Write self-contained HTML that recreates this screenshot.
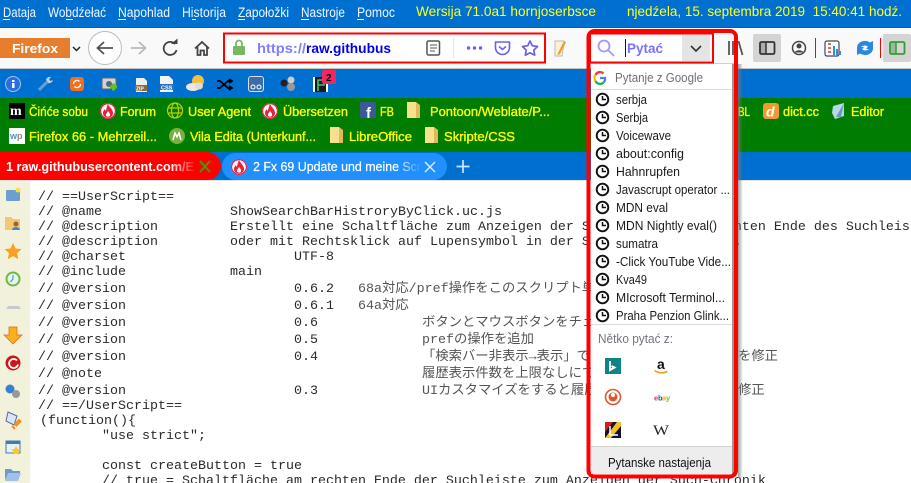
<!DOCTYPE html>
<html><head><meta charset="utf-8"><style>
html,body{margin:0;padding:0;background:#fff;overflow:hidden;width:911px;height:483px}
svg{display:block}
text{font-family:"Liberation Sans","Noto Sans CJK JP",sans-serif;white-space:pre}
.m{font-size:13.5px;fill:#f0f6ff}
.y{font-size:14px;fill:#ffff20}
.b{font-size:13px;fill:#ffff00;stroke:#ffff00;stroke-width:.35px}
.c{font-family:"Liberation Mono","Noto Sans CJK JP",monospace;font-size:13.33px;fill:#2a2a2a}
.j{fill:#555}
.p{font-size:12.5px;fill:#1a1a1a}
</style></head><body>
<svg width="911" height="483" viewBox="0 0 911 483" xmlns="http://www.w3.org/2000/svg">
<defs>
<g id="clock"><circle cx="0" cy="0" r="5.800" fill="#fff" stroke="#111" stroke-width="1.900"/><path d="M0-3.500V0H3.500" fill="none" stroke="#111" stroke-width="1.500"/></g>
<g id="fire"><circle r="8" fill="#fff"/><circle r="7.400" fill="none" stroke="#e02040" stroke-width="1.200"/><path d="M0-7C1 -4 5-2 5 2C5 5 2.500 6.500 0 6.500C-2.500 6.500-5 5-5 2C-5 0-4-1-3-2C-3-1-2.500 0-2-0.500C-1.500-3-1-5 0-7Z" fill="#e8203a"/><path d="M0 0C1 1.500 2.500 2.500 2 4.500C1.500 6-1.500 6-2 4.500C-2.500 3-1 2 0 0Z" fill="#fff"/></g>
<g id="folder"><path d="M0 1H9V17H0Z" fill="#f7e08e"/><path d="M9 1L13 4V17H9Z" fill="#e2b95a"/></g>
<linearGradient id="fr" x1="0" x2="1"><stop offset="0" stop-color="#ff0000" stop-opacity="0"/><stop offset="1" stop-color="#ff0000"/></linearGradient>
<linearGradient id="fb" x1="0" x2="1"><stop offset="0" stop-color="#2090ff" stop-opacity="0"/><stop offset="1" stop-color="#2090ff"/></linearGradient>
<linearGradient id="sh" x1="0" x2="1"><stop offset="0" stop-color="#777" stop-opacity=".7"/><stop offset="1" stop-color="#777" stop-opacity="0"/></linearGradient>
</defs>

<!-- bands -->
<rect width="911" height="27" fill="#0070d0"/>
<rect y="27" width="911" height="1" fill="#0a5ea8"/>
<rect y="28" width="911" height="40" fill="#f9f9fa"/>
<rect y="68" width="911" height="1" fill="#c4c4c4"/>
<rect y="69" width="911" height="29" fill="#0070d0"/>
<rect y="98" width="911" height="54" fill="#007c00"/>
<rect y="152" width="911" height="28" fill="#0070d0"/>
<rect y="180" width="911" height="303" fill="#fff"/>
<rect y="180" width="911" height="1" fill="#e4e4e4"/>
<rect y="181" width="30" height="302" fill="#f2f2dc"/>

<!-- menu -->
<text class="m" x="3" y="17" textLength="33" lengthAdjust="spacingAndGlyphs">Dataja</text><rect x="3" y="19" width="7" height="1" fill="#fff"/>
<text class="m" x="48" y="17" textLength="58" lengthAdjust="spacingAndGlyphs">Wobdźełać</text><rect x="66" y="19" width="7" height="1" fill="#fff"/>
<text class="m" x="118" y="17" textLength="52" lengthAdjust="spacingAndGlyphs">Napohlad</text><rect x="118" y="19" width="8" height="1" fill="#fff"/>
<text class="m" x="182" y="17" textLength="44" lengthAdjust="spacingAndGlyphs">Historija</text><rect x="192" y="19" width="4" height="1" fill="#fff"/>
<text class="m" x="238" y="17" textLength="51" lengthAdjust="spacingAndGlyphs">Zapołožki</text><rect x="238" y="19" width="7" height="1" fill="#fff"/>
<text class="m" x="301" y="17" textLength="44" lengthAdjust="spacingAndGlyphs">Nastroje</text><rect x="301" y="19" width="8" height="1" fill="#fff"/>
<text class="m" x="357" y="17" textLength="38" lengthAdjust="spacingAndGlyphs">Pomoc</text><rect x="357" y="19" width="7" height="1" fill="#fff"/>
<text class="y" x="416" y="16" textLength="180" lengthAdjust="spacingAndGlyphs">Wersija 71.0a1 hornjoserbsce</text>
<text class="y" x="627" y="16" textLength="275" lengthAdjust="spacingAndGlyphs">njedźela, 15. septembra 2019  15:40:41 hodź.</text>

<!-- nav -->
<rect x="0" y="38" width="70" height="20" fill="#e67e2e"/>
<text x="12" y="53" font-size="13" font-weight="bold" fill="#fff" textLength="46" lengthAdjust="spacingAndGlyphs">Firefox</text>
<path d="M73 47l3.500 3.500 3.500-3.500" fill="none" stroke="#222" stroke-width="1.500"/>
<circle cx="105" cy="48" r="16.500" fill="#fff" stroke="#bbb" stroke-width="1"/>
<path d="M113 48H98M104 42l-6.500 6 6.500 6" fill="none" stroke="#555" stroke-width="1.800"/>
<path d="M131 48H145M139 42l6.500 6-6.500 6" fill="none" stroke="#b8b8b8" stroke-width="1.800"/>
<path d="M175 44A6.500 6.500 0 1 0 176.500 50" fill="none" stroke="#444" stroke-width="1.800"/><path d="M171 44h6.500v-5.500z" fill="#444"/>
<path d="M195 48.500l7-6.500 7 6.500M197.500 47V55H200.500V50.500H204V55H207V47" fill="none" stroke="#444" stroke-width="1.800"/>

<!-- url -->
<rect x="224" y="33.500" width="321" height="29" fill="#fff" stroke="#f00" stroke-width="2"/>
<rect x="233" y="46" width="12" height="9" rx="1" fill="#78b860"/><path d="M236 46V43.500A3 3 0 0 1 242 43.500V46" fill="none" stroke="#78b860" stroke-width="1.800"/>
<text x="257" y="53" font-size="14" font-weight="bold" fill="#8080ff" textLength="49" lengthAdjust="spacingAndGlyphs">https://</text>
<text x="306" y="53" font-size="14" font-weight="bold" fill="#0000f0" textLength="85" lengthAdjust="spacingAndGlyphs">raw.githubus</text>
<rect x="427" y="41" width="12.500" height="14" rx="1.500" fill="none" stroke="#555" stroke-width="1.500"/><path d="M430 45h7M430 48h7M430 51h5" stroke="#555" stroke-width="1"/>
<rect x="453" y="38" width="1" height="20" fill="#e4e4e4"/>
<circle cx="468.500" cy="48" r="1.700" fill="#6a60f0"/><circle cx="474.500" cy="48" r="1.700" fill="#6a60f0"/><circle cx="480.500" cy="48" r="1.700" fill="#6a60f0"/>
<path d="M495.500 42H509.500V47.500A7 7 0 0 1 495.500 47.500Z" fill="none" stroke="#6a60f0" stroke-width="1.600" stroke-linejoin="round"/><path d="M499 46.500l3.500 3 3.500-3" fill="none" stroke="#6a60f0" stroke-width="1.600"/>
<path d="M530 41l2.300 4.700 5.200.8-3.700 3.600.9 5.100-4.700-2.400-4.700 2.400.9-5.100-3.700-3.600 5.200-.8z" fill="none" stroke="#6a60f0" stroke-width="1.700" stroke-linejoin="round"/>
<path d="M555 41h9v3l-2 12h-7z" fill="#fdf3d0" stroke="#bbb" stroke-width="1"/><path d="M558 53l6-12 2 1-6 12-2.500 1z" fill="#e8a030"/>

<!-- right toolbar -->
<rect x="753" y="34" width="28" height="28" rx="2" fill="#d4d4d4"/>
<rect x="760" y="42" width="14.500" height="12" rx="1.500" fill="none" stroke="#333" stroke-width="1.800"/><rect x="760" y="42" width="6" height="12" fill="#333" opacity=".25"/><path d="M766 42v12" stroke="#333" stroke-width="1.500"/>
<circle cx="799" cy="48" r="6.500" fill="none" stroke="#444" stroke-width="1.500"/><circle cx="799" cy="46" r="2.500" fill="#444"/><path d="M794.500 52.500a5 4 0 0 1 9 0" fill="#444"/>
<rect x="815" y="38" width="1" height="20" fill="#f00"/>
<rect x="825" y="41" width="14" height="15" rx="2" fill="#fff" stroke="#445" stroke-width="1.200"/><path d="M828 44h3M828 48h3M828 52h3" stroke="#d33" stroke-width="1.500"/><path d="M834 55V46M837 55V49M840 55V51" stroke="#3a8ad0" stroke-width="2"/>
<path d="M857 47a8 7 0 0 1 13-4.500l3-1.500v8h-7l2-2.500a5 4 0 0 0-7.500 1z" fill="#2a88e0"/><path d="M873 49a8 7 0 0 1-13 4.500l-3 1.500v-8h7l-2 2.500a5 4 0 0 0 7.500-1z" fill="#2a88e0"/>
<rect x="880" y="38" width="1" height="20" fill="#f00"/>
<rect x="883" y="34" width="28" height="28" rx="2" fill="#d4d4d4"/>
<rect x="890" y="42" width="14.500" height="12" rx="1.500" fill="none" stroke="#3a9a3a" stroke-width="1.800"/><rect x="890" y="42" width="6" height="12" fill="#3a9a3a" opacity=".4"/><path d="M896 42v12" stroke="#3a9a3a" stroke-width="1.500"/>

<!-- icon bar -->
<circle cx="13" cy="84" r="7.500" fill="#2a6fd8"/><circle cx="13" cy="84" r="7.500" fill="none" stroke="#a8c4f0"/><rect x="12" y="83" width="2.500" height="5" fill="#fff"/><rect x="12" y="80" width="2.500" height="2" fill="#fff"/>
<path d="M39 90l8-8" stroke="#6aa0d8" stroke-width="3"/><path d="M46 80a4 4 0 0 1 5-3l-2 2.500 1.500 1.500 2.500-1a4 4 0 0 1-5 3z" fill="#c0d0e0"/>
<rect x="70" y="77" width="14" height="14" rx="3" fill="#f07020"/><path d="M73.500 84a3.500 3.500 0 0 1 6-2.500M80.500 84a3.500 3.500 0 0 1-6 2.500" fill="none" stroke="#fff" stroke-width="1.300"/>
<rect x="102" y="78" width="14" height="11" rx="1.500" fill="#cfd4da" stroke="#666"/><circle cx="109" cy="84" r="3" fill="#567"/><rect x="110" y="85.500" width="7" height="3" fill="#5cc030"/><rect x="112" y="83.500" width="3" height="7" fill="#5cc030"/>
<path d="M136 78h8l3 3v11h-11z" fill="#eee"/><rect x="135" y="85" width="12" height="6" fill="#8a6a30"/><text x="136" y="90.500" font-size="5" font-weight="bold" fill="#fff">ZIP</text>
<path d="M160 76h9l4 4v12h-13z" fill="#f4f4f4"/><rect x="160" y="84" width="14" height="6" fill="#2a72c0"/><text x="161" y="89.500" font-size="5.500" font-weight="bold" fill="#fff">CSS</text>
<circle cx="198" cy="81" r="6" fill="#f0c040"/><ellipse cx="193" cy="87" rx="7" ry="4" fill="#ece8e0"/><ellipse cx="199" cy="86" rx="4" ry="3.500" fill="#e0dcd2"/>
<path d="M217 81h3l8 7h3M217 88h3l8-7h3M229 79l3 2-3 2M229 86l3 2-3 2" fill="none" stroke="#000" stroke-width="1.700"/>
<rect x="248.500" y="76.500" width="15" height="15" rx="2.500" fill="#3a6ea8" stroke="#dde" stroke-width="1"/><circle cx="253" cy="87" r="2" fill="none" stroke="#fff"/><circle cx="259" cy="87" r="2" fill="none" stroke="#fff"/>
<circle cx="284" cy="83" r="3.500" fill="#222"/><circle cx="291" cy="80" r="3.500" fill="#ccc"/><circle cx="291" cy="87" r="4" fill="#999"/>
<rect x="313" y="77" width="15" height="15" fill="#fff"/><rect x="315" y="77" width="11" height="15" fill="#1a1a1a"/><path d="M318 91V80H324V85H318" fill="none" stroke="#40c080" stroke-width="1.600"/>
<rect x="322" y="70" width="14" height="14" rx="2" fill="#f02860"/><text x="326" y="81" font-size="10" font-weight="bold" fill="#111">2</text>

<!-- bookmarks 1 -->
<rect x="9" y="103" width="16" height="16" fill="#000"/><text x="10" y="115" font-size="14" font-weight="bold" fill="#fff" style="font-family:'Liberation Serif',serif">m</text>
<text class="b" x="29" y="116" textLength="59" lengthAdjust="spacingAndGlyphs">Čińće sobu</text>
<use href="#fire" x="108" y="111"/>
<text class="b" x="120" y="116" textLength="36" lengthAdjust="spacingAndGlyphs">Forum</text>
<g fill="none" stroke="#b8d000" stroke-width="1.200"><circle cx="175" cy="110.500" r="7.500"/><ellipse cx="175" cy="110.500" rx="3.500" ry="7.500"/><path d="M168 108h14M168 113h14"/></g>
<text class="b" x="188" y="116" textLength="63" lengthAdjust="spacingAndGlyphs">User Agent</text>
<use href="#fire" x="270" y="111"/>
<text class="b" x="283" y="116" textLength="65" lengthAdjust="spacingAndGlyphs">Übersetzen</text>
<rect x="360" y="102" width="16" height="16" fill="#3b5998"/><text x="366" y="118" font-size="15" font-weight="bold" fill="#fff">f</text>
<text class="b" x="380" y="116" textLength="14" lengthAdjust="spacingAndGlyphs">FB</text>
<use href="#folder" x="407" y="101"/>
<text class="b" x="430" y="116" textLength="120" lengthAdjust="spacingAndGlyphs">Pontoon/Weblate/P...</text>
<text class="b" x="738" y="116" textLength="12" lengthAdjust="spacingAndGlyphs">BL</text>
<rect x="763" y="103" width="16" height="16" rx="3" fill="#f09a30"/><text x="766" y="116.500" font-size="14" font-weight="bold" font-style="italic" fill="#fff">d</text>
<text class="b" x="783" y="116" textLength="36" lengthAdjust="spacingAndGlyphs">dict.cc</text>
<path d="M833 106l11-3v13l-9 3-3-6z" fill="#b8d8e8"/><path d="M844 103l-3 14h-5" fill="#6a9ab8"/>
<text class="b" x="851" y="116" textLength="33" lengthAdjust="spacingAndGlyphs">Editor</text>

<!-- bookmarks 2 -->
<rect x="9" y="128" width="16" height="16" fill="#fff"/><text x="10" y="139" font-size="9" font-weight="bold" fill="#4a90c8">w</text><text x="17" y="139" font-size="9" font-weight="bold" fill="#888">p</text>
<text class="b" x="29" y="141" textLength="128" lengthAdjust="spacingAndGlyphs">Firefox 66 - Mehrzeil...</text>
<circle cx="177" cy="136" r="8" fill="#7ab040"/><path d="M173 140l2-7 2 4 2-4 2 7" fill="none" stroke="#fff" stroke-width="1.500"/>
<text class="b" x="190" y="141" textLength="126" lengthAdjust="spacingAndGlyphs">Vila Edita (Unterkunf...</text>
<use href="#folder" x="330" y="126"/>
<text class="b" x="349" y="141" textLength="63" lengthAdjust="spacingAndGlyphs">LibreOffice</text>
<use href="#folder" x="425" y="126"/>
<text class="b" x="444" y="141" textLength="71" lengthAdjust="spacingAndGlyphs">Skripte/CSS</text>

<!-- tabs -->
<path d="M0 152H207A14 14 0 0 1 207 180H0Z" fill="#f00"/>
<text x="6" y="171" font-size="13" font-weight="bold" fill="#fff" textLength="188" lengthAdjust="spacingAndGlyphs">1 raw.githubusercontent.com/E</text>
<rect x="170" y="155" width="27" height="22" fill="url(#fr)"/>
<path d="M200 161l10 11M210 161l-10 11" stroke="#38a000" stroke-width="2"/>
<rect x="222" y="153" width="225" height="27" rx="13.500" fill="#2090ff"/>
<use href="#fire" x="239" y="167"/>
<text x="253" y="171" font-size="13" fill="#fff" stroke="#fff" stroke-width=".2" textLength="168" lengthAdjust="spacingAndGlyphs">2 Fx 69 Update und meine Scr</text>
<rect x="395" y="155" width="27" height="22" fill="url(#fb)"/>
<path d="M425 162l10 10M435 162l-10 10" stroke="#dceaff" stroke-width="1.500"/>
<path d="M463 160v13M456.500 166.500h13" stroke="#cfe4ff" stroke-width="1.700"/>

<!-- sidebar icons -->
<rect x="6" y="190" width="14" height="11" rx="1" fill="#6e9ecf"/><circle cx="18" cy="190" r="2.500" fill="#f8e040"/>
<path d="M5 217h6l2 2h7v11H5z" fill="#f0c878"/><circle cx="16" cy="224" r="2.500" fill="#a06030"/><path d="M12 230a4 3 0 0 1 8 0z" fill="#3a88d0"/>
<path d="M13 243l2.500 5.500 6 .6-4.500 4 1.300 6-5.300-3-5.300 3 1.300-6-4.500-4 6-.6z" fill="#f8a020"/>
<circle cx="13" cy="279" r="6.500" fill="#e8f4f0" stroke="#70b840" stroke-width="2"/><path d="M13 275v4l-2.500 3" stroke="#3090c0" fill="none"/>
<path d="M6 309h15l-2-3H8z" fill="#c8c8d0"/>
<path d="M9 327h8v8h5l-9 9-9-9h5z" fill="#f8b020" stroke="#e06010" stroke-width=".7"/>
<circle cx="13" cy="363" r="7.500" fill="#c81818"/><path d="M17 360.500a4.500 4.500 0 1 0 1 4" fill="none" stroke="#fff" stroke-width="1.800"/>
<circle cx="10" cy="389" r="4.500" fill="#3a80d0"/><circle cx="16" cy="394" r="4" fill="#999"/>
<path d="M8 412l9 4-3 9-8-4z" fill="#dde4f4" stroke="#5868a8"/><path d="M15 424l4-4 1.500 1.500-4 4zM12 426l3 3" stroke="#f09020" stroke-width="2" fill="none"/>
<rect x="6" y="441" width="14" height="12" fill="#e8f0f8" stroke="#4878b0"/><rect x="6" y="441" width="14" height="3" fill="#4878b0"/><path d="M16 446l1.500 3 3.300.4-2.400 2.200.7 3.200-3.100-1.700-3.100 1.700.7-3.200-2.400-2.200 3.300-.4z" fill="#f8c820"/>
<path d="M5 469h6l2 2h7v2H9l-4 7z" fill="#7098c8"/><path d="M8 473h13l-3 8H5z" fill="#a0c0e8"/>

<!-- code -->
<text class="c" x="38" y="200">// ==UserScript==</text>
<text class="c" x="38" y="215">// @name</text><text class="c" x="230" y="215">ShowSearchBarHistroryByClick.uc.js</text>
<text class="c" x="38" y="230">// @description</text><text class="c" x="230" y="230">Erstellt eine Schaltfläche zum Anzeigen der Suchhistorie am rechten Ende des Suchleis</text>
<text class="c" x="38" y="245">// @description</text><text class="c" x="230" y="245">oder mit Rechtsklick auf Lupensymbol in der Suchleiste aufrufen.</text>
<text class="c" x="38" y="260">// @charset</text><text class="c" x="294" y="260">UTF-8</text>
<text class="c" x="38" y="275">// @include</text><text class="c" x="230" y="275">main</text>
<text class="c" x="38" y="292">// @version</text><text class="c" x="294" y="292">0.6.2</text><text class="c j" x="358" y="292">68a対応/pref操作をこのスクリプト単</text>
<text class="c" x="38" y="309">// @version</text><text class="c" x="294" y="309">0.6.1</text><text class="c j" x="358" y="309">64a対応</text>
<text class="c" x="38" y="326">// @version</text><text class="c" x="294" y="326">0.6</text><text class="c j" x="422" y="326">ボタンとマウスボタンをチェ</text>
<text class="c" x="38" y="343">// @version</text><text class="c" x="294" y="343">0.5</text><text class="c j" x="422" y="343">prefの操作を追加</text>
<text class="c" x="38" y="360">// @version</text><text class="c" x="294" y="360">0.4</text><text class="c j" x="422" y="360">「検索バー非表示→表示」で</text><text class="c j" x="738" y="360">を修正</text>
<text class="c" x="38" y="377">// @note</text><text class="c j" x="422" y="377">履歴表示件数を上限なしにで</text>
<text class="c" x="38" y="394">// @version</text><text class="c" x="294" y="394">0.3</text><text class="c j" x="422" y="394">UIカスタマイズをすると履歴</text><text class="c j" x="738" y="394">修正</text>
<text class="c" x="38" y="409">// ==/UserScript==</text>
<text class="c" x="40" y="424">(function(){</text>
<text class="c" x="102" y="439">"use strict";</text>
<text class="c" x="102" y="469">const createButton = true</text>
<text class="c" x="102" y="484">// true = Schaltfläche am rechten Ende der Suchleiste zum Anzeigen der Such-Chronik</text>

<!-- search popup -->
<rect x="738" y="64" width="5" height="414" fill="url(#sh)"/>
<rect x="591" y="64" width="143" height="410" fill="#fff"/>
<rect x="591" y="63" width="143" height="1" fill="#d0d0d0"/>
<rect x="732" y="64" width="2" height="410" fill="#999"/>
<rect x="588.500" y="31" width="147.500" height="445.500" rx="6" fill="none" stroke="#f00" stroke-width="4"/>
<rect x="590" y="33.500" width="123" height="29" fill="#fff" stroke="#f00" stroke-width="2"/>
<rect x="682" y="35" width="28" height="26" fill="#e4e4e4"/>
<circle cx="604" cy="46" r="5.500" fill="none" stroke="#a098ff" stroke-width="1.800"/><path d="M608 50l6 6" stroke="#a098ff" stroke-width="1.800"/>
<rect x="625" y="39" width="1" height="18" fill="#0000d0"/>
<text x="627" y="53" font-size="14" font-weight="bold" fill="#7a70ff" textLength="36" lengthAdjust="spacingAndGlyphs">Pytać</text>
<path d="M691 46l5 5 5-5" fill="none" stroke="#333" stroke-width="1.600"/>
<path d="M729 41V55M733 41V55M738.500 41l4 14" fill="none" stroke="#555" stroke-width="1.800"/>
<g fill="none" stroke-width="2.300"><path d="M603.500 73.500A5 5 0 0 0 595.500 75" stroke="#ea4335"/><path d="M595.500 75A5 5 0 0 0 595.500 81" stroke="#fbbc05"/><path d="M595.500 81A5 5 0 0 0 603.500 82.500" stroke="#34a853"/><path d="M603.500 82.500A5 5 0 0 0 605 78H600" stroke="#4285f4"/></g>
<text x="615" y="82" font-size="12.500" fill="#6e6e78" textLength="88" lengthAdjust="spacingAndGlyphs">Pytanje z Google</text>
<rect x="591" y="89" width="141" height="1" fill="#dcdcdc"/>
<use href="#clock" x="602.500" y="99.500"/><text class="p" x="616" y="104" textLength="31" lengthAdjust="spacingAndGlyphs">serbja</text>
<use href="#clock" x="602.500" y="117.500"/><text class="p" x="616" y="122" textLength="32" lengthAdjust="spacingAndGlyphs">Serbja</text>
<use href="#clock" x="602.500" y="135.500"/><text class="p" x="616" y="140" textLength="55" lengthAdjust="spacingAndGlyphs">Voicewave</text>
<use href="#clock" x="602.500" y="153.500"/><text class="p" x="616" y="158" textLength="68" lengthAdjust="spacingAndGlyphs">about:config</text>
<use href="#clock" x="602.500" y="171.500"/><text class="p" x="616" y="176" textLength="64" lengthAdjust="spacingAndGlyphs">Hahnrupfen</text>
<use href="#clock" x="602.500" y="189.500"/><text class="p" x="616" y="194" textLength="114" lengthAdjust="spacingAndGlyphs">Javascrupt operator ...</text>
<use href="#clock" x="602.500" y="207.500"/><text class="p" x="616" y="212" textLength="52" lengthAdjust="spacingAndGlyphs">MDN eval</text>
<use href="#clock" x="602.500" y="225.500"/><text class="p" x="616" y="230" textLength="101" lengthAdjust="spacingAndGlyphs">MDN Nightly eval()</text>
<use href="#clock" x="602.500" y="243.500"/><text class="p" x="616" y="248" textLength="42" lengthAdjust="spacingAndGlyphs">sumatra</text>
<use href="#clock" x="602.500" y="261.500"/><text class="p" x="616" y="266" textLength="115" lengthAdjust="spacingAndGlyphs">-Click YouTube Vide...</text>
<use href="#clock" x="602.500" y="279.500"/><text class="p" x="616" y="284" textLength="31" lengthAdjust="spacingAndGlyphs">Kva49</text>
<use href="#clock" x="602.500" y="297.500"/><text class="p" x="616" y="302" textLength="109" lengthAdjust="spacingAndGlyphs">MIcrosoft Terminol...</text>
<use href="#clock" x="602.500" y="315.500"/><text class="p" x="616" y="320" textLength="113" lengthAdjust="spacingAndGlyphs">Praha Penzion Glink...</text>
<rect x="591" y="324" width="141" height="1" fill="#dcdcdc"/>
<text x="598" y="343" font-size="12.500" fill="#74747e" textLength="75" lengthAdjust="spacingAndGlyphs">Nětko pytać z:</text>
<rect x="605" y="358" width="16" height="16" fill="#0e8484"/><path d="M610 361v9l4.500-2.500-3-1.500" fill="none" stroke="#fff" stroke-width="2"/>
<text x="657" y="369" font-size="14" font-weight="bold" fill="#111">a</text><path d="M654.500 370.500q6 4 13 1" fill="none" stroke="#f09a20" stroke-width="1.500"/>
<circle cx="613" cy="397" r="7.500" fill="#fff" stroke="#de5833" stroke-width="1.600"/><circle cx="613" cy="397" r="4.500" fill="#de5833"/><circle cx="613" cy="395" r="2" fill="#fff"/>
<text x="654" y="400.500" font-size="7.500" font-weight="bold" fill="#e53238">e</text><text x="658" y="400.500" font-size="7.500" font-weight="bold" fill="#0064d2">b</text><text x="662" y="400.500" font-size="7.500" font-weight="bold" fill="#f5af02">a</text><text x="666" y="400.500" font-size="7.500" font-weight="bold" fill="#86b817">y</text>
<path d="M605 422h16v16h-16z" fill="#101030"/><path d="M605 438l12-16h4v4l-10 12z" fill="#f8c020"/><path d="M605 422h8l-8 10z" fill="#d02020"/><path d="M610 426v9h8" fill="none" stroke="#fff" stroke-width="1.500"/>
<text x="653" y="435" font-size="15" fill="#222" style="font-family:'Liberation Serif',serif" textLength="16" lengthAdjust="spacingAndGlyphs">W</text>
<rect x="591" y="446" width="141" height="1" fill="#d0d0d0"/>
<rect x="591" y="447" width="141" height="27" fill="#ededed"/>
<text x="608" y="467" font-size="12.500" fill="#111" textLength="103" lengthAdjust="spacingAndGlyphs">Pytanske nastajenja</text>
</svg>
</body></html>
